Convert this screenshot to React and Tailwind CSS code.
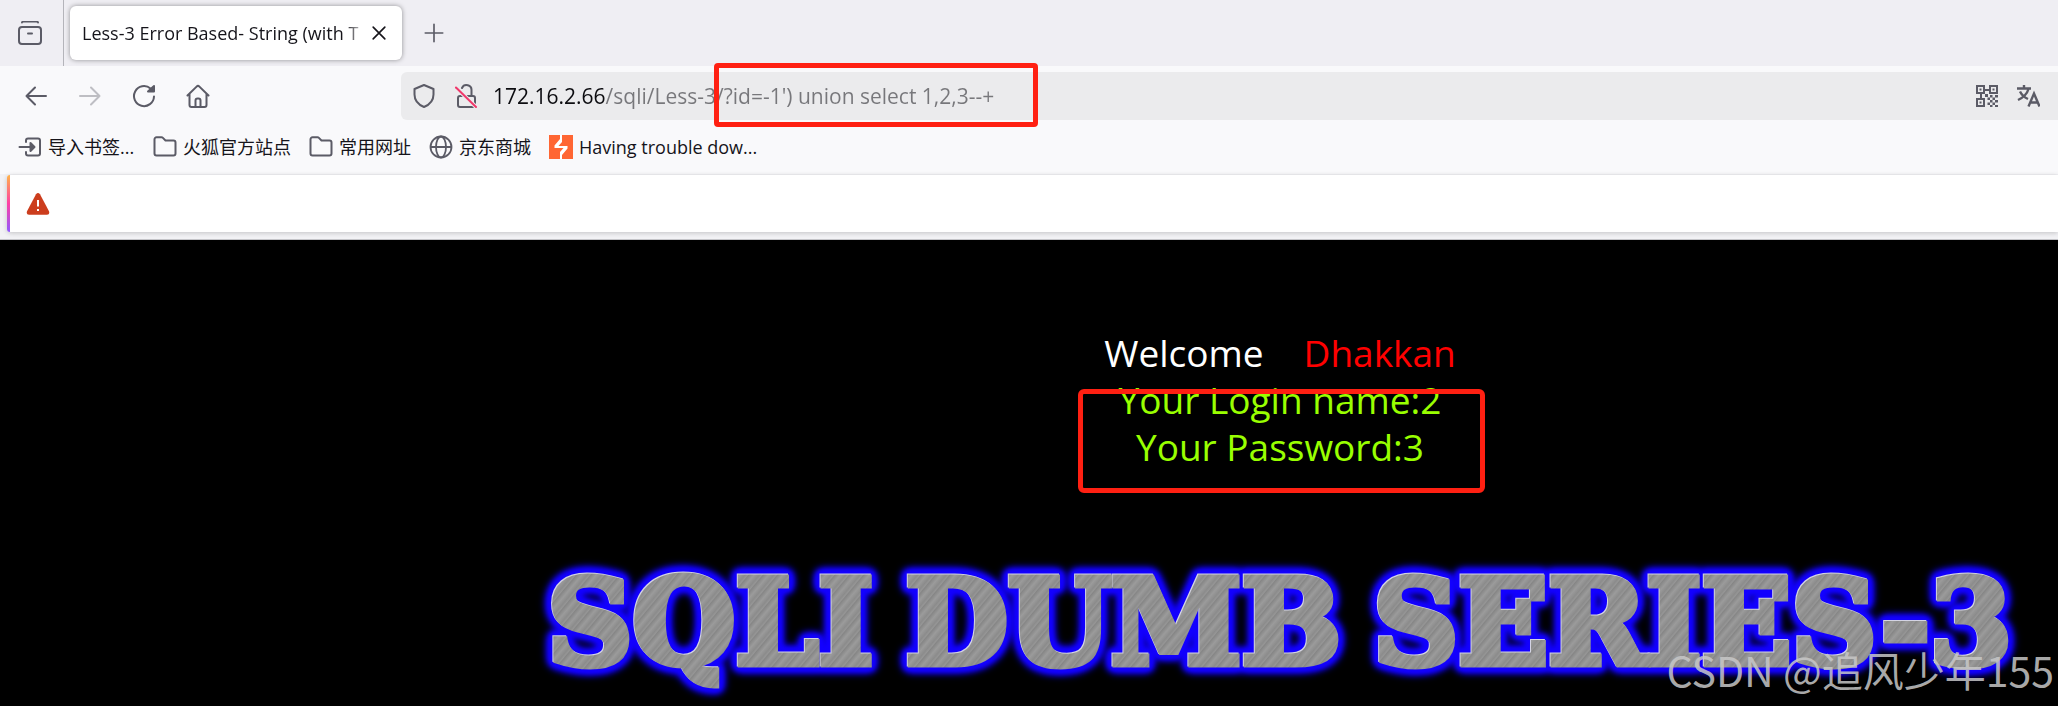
import React from "react";

function Stroke({ children, className = "h-6 w-6", width = 2, ...rest }) {
  return (
    <svg
      viewBox="0 0 24 24"
      fill="none"
      stroke="currentColor"
      strokeWidth={width}
      strokeLinecap="round"
      strokeLinejoin="round"
      aria-hidden="true"
      className={"shrink-0 " + className}
      {...rest}
    >
      {children}
    </svg>
  );
}

const FolderIcon = () => (
  <Stroke>
    <path d="M3.5 20.5h17a2 2 0 0 0 2-2v-11a2 2 0 0 0-2-2h-8l-2.6-2.6a2 2 0 0 0-1.4-.6h-5a2 2 0 0 0-2 2v14.200a2 2 0 0 0 2 2z" />
  </Stroke>
);

const ImportIcon = () => (
  <Stroke>
    <path d="M8 7V5.500a2 2 0 0 1 2-2h10a2 2 0 0 1 2 2v13a2 2 0 0 1-2 2H10a2 2 0 0 1-2-2V17M1.500 12H13" />
    <path d="M12.500 8v8l4-4z" fill="currentColor" />
  </Stroke>
);

const GlobeIcon = () => (
  <Stroke width={1.8}>
    <circle cx="12" cy="12" r="10.500" />
    <ellipse cx="12" cy="12" rx="5" ry="10.500" />
    <path d="M2 12h20" />
  </Stroke>
);

const BurpIcon = () => (
  <svg viewBox="0 0 24 24" className="h-6 w-6 shrink-0" aria-hidden="true">
    <path d="M0 0h24v24H0z" fill="#ff6633" />
    <path d="M11 0h2v7L9.500 11H18.500v2.500L13 20v4h-2v-7l3.500-4H5.500v-2.500L11 4z" fill="#fff" />
  </svg>
);

const QrIcon = () => (
  <svg viewBox="0 0 22 22" className="h-[22px] w-[22px] shrink-0" fill="#5b5b66" aria-hidden="true">
    <path
      fillRule="evenodd"
      d="M0 0h9v9H0zM2 2v5h5V2zM13 0h9v9h-9zM15 2v5h5V2zM0 13h9v9H0zM2 15v5h5v-5z"
    />
    <path d="M3.500 3.500h2v2h-2zM16.500 3.500h2v2h-2zM3.500 16.500h2v2h-2zM9 4h4v2H9zM4 9h2v4H4zM9 9h3v3H9zM14 10h2.500v2.500H14zM19 10h3v2.500h-3zM11.500 12.500H14V15h-2.500zM16.500 12.500H19V15h-2.500zM14 15h2.500v2.500H14zM19 15h3v2.500h-3zM11.500 17.500H14V20h-2.500zM16.500 17.500H19V20h-2.500zM14 20h2.500v2H14zM19 20h3v2h-3z" />
  </svg>
);

const bookmarks = [
  { label: "导入书签...", Icon: ImportIcon, width: "w-[117px]" },
  { label: "火狐官方站点", Icon: FolderIcon, width: "w-[138px]" },
  { label: "常用网址", Icon: FolderIcon, width: "w-[102px]" },
  { label: "京东商城", Icon: GlobeIcon, width: "w-[102px]" },
  { label: "Having trouble dow...", Icon: BurpIcon, width: "" },
];

function TabBar() {
  return (
    <div className="flex h-[66px] items-center bg-[#efeef3] text-[#5b5b66]">
      <button aria-label="Tab history" className="flex h-full w-16 items-center justify-end border-r border-[#b4b4ba] pr-[21px]">
        <Stroke>
          <path d="M4 1.500q.4-1 1.500-1h13q1.100 0 1.500 1" />
          <rect x="1" y="6" width="22" height="17" rx="3" />
          <path d="M10 12.500h4" />
        </Stroke>
      </button>
      <div className="ml-1.5 flex h-[54px] w-[332px] items-center rounded-md bg-white pl-3 shadow-[0_0_5px_rgba(0,0,0,0.4)]">
        <span className="w-[286px] bg-[linear-gradient(to_right,#15141a_262px,#ffffff_286px)] bg-clip-text text-[18px] leading-6 whitespace-nowrap text-transparent">
          Less-3 Error Based- String (with T
        </span>
        <button aria-label="Close tab" className="ml-1 text-[#15141a]">
          <Stroke className="h-3.5 w-3.5" width={2.8}>
            <path d="M2 2l20 20M22 2L2 22" />
          </Stroke>
        </button>
      </div>
      <button aria-label="New tab" className="ml-[22px]">
        <Stroke className="h-5 w-5">
          <path d="M12 1.500v21M1.500 12h21" />
        </Stroke>
      </button>
    </div>
  );
}

function Toolbar() {
  return (
    <div className="flex h-[60px] items-center pl-6 text-[#5b5b66]">
      <div className="flex w-[377px] items-center gap-[30px]">
        <button aria-label="Back">
          <Stroke>
            <path d="M22 12H2.500M11 3.500L2.500 12l8.500 8.500" />
          </Stroke>
        </button>
        <button aria-label="Forward" className="text-[#bebec3]" disabled>
          <Stroke>
            <path d="M2 12h19.500M13 3.500l8.500 8.500-8.500 8.500" />
          </Stroke>
        </button>
        <button aria-label="Reload">
          <Stroke>
            <path d="M22 12.500A10 10 0 1 1 18.500 4.500" />
            <path d="M22 2v5.500h-6z" fill="currentColor" />
          </Stroke>
        </button>
        <button aria-label="Home">
          <Stroke>
            <path d="M1.500 11.500L10.600 2.600a2 2 0 0 1 2.800 0l9.100 8.900M3.500 10v11a2 2 0 0 0 2 2h13a2 2 0 0 0 2-2V10M9.500 22.500v-6a2 2 0 0 1 2-2h1a2 2 0 0 1 2 2v6" />
          </Stroke>
        </button>
      </div>
      <div className="relative flex h-12 min-w-0 flex-1 items-center rounded-l-md bg-[#ebebed] pr-[18px] pl-[11px]">
        <Stroke>
          <path d="M12 1L2.500 5v5.500c0 5.500 3.500 10 9.500 12.500 6-2.500 9.500-7 9.500-12.500V5z" />
        </Stroke>
        <Stroke className="ml-[18px] h-6 w-6">
          <rect x="4" y="12" width="17" height="11" rx="2" />
          <path d="M8 4a5 5 0 0 1 9.500 2.500V12" />
          <path d="M2 3.500l20 19.500" stroke="#ebebed" strokeWidth="4" />
          <path d="M2 3.500l20 19.500" stroke="#f0386b" />
        </Stroke>
        <input
          aria-label="Address"
          defaultValue="172.16.2.66/sqli/Less-3/?id=-1') union select 1,2,3--+"
          className="ml-[15px] h-10 min-w-0 flex-1 bg-[linear-gradient(to_right,#0c0c10_112px,#77777b_112px)] bg-clip-text text-[21px] text-transparent outline-none"
        />
        <div className="flex items-center gap-[18px]">
          <button aria-label="QR code">
            <QrIcon />
          </button>
          <button aria-label="Translate" className="text-[#5b5b66]">
            <Stroke width={2.4} strokeLinecap="butt" strokeLinejoin="miter">
              <path d="M1 4.500h14M8 1v3.500M12.500 5Q10.500 12 2 16M4 7.500Q6.500 12.500 12 15M12.500 22.500L18 9.500l5.500 13M14.500 18.500h7.500" />
            </Stroke>
          </button>
        </div>
        <div className="pointer-events-none absolute -top-[9px] left-[313px] h-16 w-[324px] rounded-sm border-[5px] border-[#ff2012]" />
      </div>
    </div>
  );
}

function Bookmarks() {
  return (
    <nav className="flex h-12 items-center gap-[18px] pb-1.5 pl-[18px] text-[#5b5b66]">
      {bookmarks.map(({ label, Icon, width }) => (
        <a key={label} href="#" className={"flex items-center gap-1.5 " + width}>
          <Icon />
          <span className="text-[18px] leading-6 whitespace-nowrap text-[#15141a]">{label}</span>
        </a>
      ))}
    </nav>
  );
}

function Notification() {
  return (
    <div className="h-[66px] border-b border-[#c4c4c8] bg-[#f2f2f5] pt-px">
      <div className="ml-[7px] flex h-[57px] items-center rounded-l-sm bg-white shadow-[0_1px_5px_rgba(0,0,0,0.2)]">
        <div className="h-full w-[3px] rounded-l-sm bg-[linear-gradient(#ffb347,#ff3fa4_50%,#9059ff)]" />
        <svg viewBox="0 0 24 24" className="ml-4 h-6 w-6" role="img" aria-label="Warning">
          <path d="M10 2.200q2-2.600 4 0l9 17q1 3.300-2 3.600H3q-3-.3-2-3.600z" fill="#cc3d1d" />
          <path d="M12 8v6.500M12 17v2" stroke="#fff" strokeWidth="2" />
        </svg>
      </div>
    </div>
  );
}

export default function App() {
  return (
    <div className="flex h-screen flex-col overflow-hidden bg-black font-['Open_Sans','Noto_Sans_CJK_SC',sans-serif]">
      <header className="shrink-0 bg-[#f9f9fb]">
        <TabBar />
        <Toolbar />
        <Bookmarks />
        <Notification />
      </header>
      <main className="relative flex-1 pt-[89px] pl-[502px] text-center">
        <div className="text-[37px] leading-[47px] text-[#99ff00]">
          <p className="flex justify-center gap-10">
            <span className="text-white">Welcome</span>
            <span className="text-[#ff0000]">Dhakkan</span>
          </p>
          <p>Your Login name:2</p>
          <p>Your Password:3</p>
        </div>
        <div className="pointer-events-none absolute top-[149px] left-[1078px] h-[104px] w-[407px] rounded-md border-[5px] border-[#ff2012]" />
        <div className="mt-[83px] flex justify-center [filter:drop-shadow(-1px_-1px_0_#d4d4e4)_drop-shadow(0_0_2px_#1400ff)_drop-shadow(0_0_2px_#1400ff)_drop-shadow(0_0_3px_#1400ff)_drop-shadow(0_0_3px_#1400ff)_drop-shadow(0_0_2px_#1400ff)]">
          <h1 className="flex gap-8 bg-[repeating-linear-gradient(130deg,#8b8b8b_0px,#969696_2px,#868686_3px,#9b9b9b_7px,#8c8c8c_11px)] bg-clip-text font-['DejaVu_Serif',serif] text-[118px] leading-[140px] font-bold whitespace-nowrap text-transparent [-webkit-text-stroke:7px_transparent]">
            <span>SQLI</span>
            <span>DUMB</span>
            <span>SERIES-3</span>
          </h1>
        </div>
        <p className="absolute right-1 bottom-3 font-['Noto_Sans_CJK_SC',sans-serif] text-[41px] leading-[50px] text-[#c8c8c8]/85">
          CSDN @追风少年155
        </p>
      </main>
    </div>
  );
}
